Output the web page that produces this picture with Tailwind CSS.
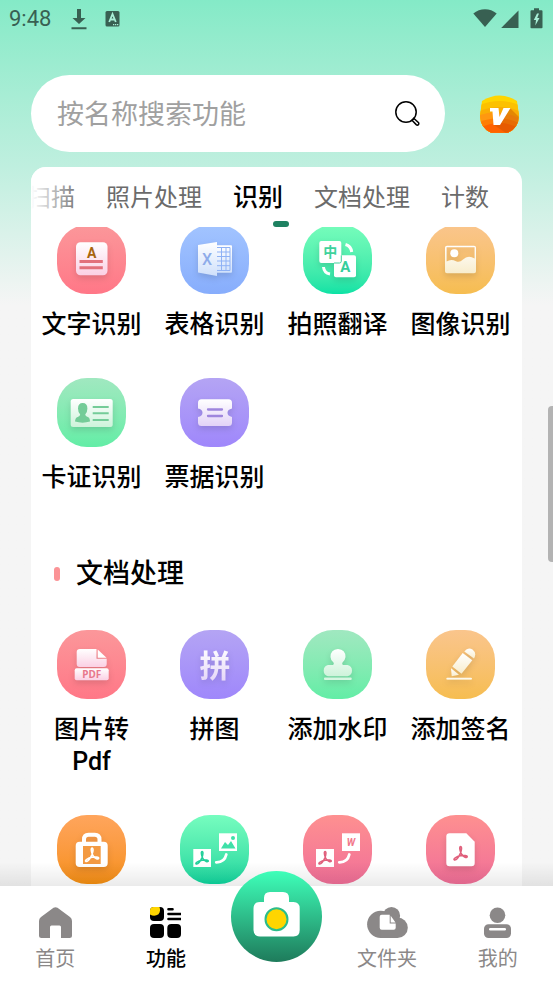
<!DOCTYPE html>
<html lang="zh-CN">
<head>
<meta charset="utf-8">
<meta name="viewport" content="width=device-width, initial-scale=1">
<title>功能</title>
<script src="https://cdn.jsdelivr.net/npm/@tailwindcss/browser@4"></script>
</head>
<body class="relative flex h-screen flex-col overflow-hidden bg-[#f5f5f5] bg-linear-to-b from-[#84eac7] via-[#bfefdf] via-[17%] to-[#f5f5f5] to-[31%] font-['Roboto','Noto_Sans_CJK_SC',sans-serif] text-black">

<svg class="absolute size-0" aria-hidden="true">
  <defs>
    <linearGradient id="pinkwhite" x1="0" y1="0" x2="0" y2="1"><stop offset="0" stop-color="#fff"/><stop offset="1" stop-color="#fbd0e4"/></linearGradient>
    <linearGradient id="bluewhite" x1="0" y1="0" x2="0" y2="1"><stop offset="0" stop-color="#fff"/><stop offset="1" stop-color="#cfe0fb"/></linearGradient>
    <linearGradient id="creamwhite" x1="0" y1="0" x2="0" y2="1"><stop offset="0" stop-color="#fff"/><stop offset="1" stop-color="#f8edcd"/></linearGradient>
    <linearGradient id="greenwhite" x1="0" y1="0" x2="0" y2="1"><stop offset="0" stop-color="#fff"/><stop offset="1" stop-color="#cdf3da"/></linearGradient>
    <linearGradient id="violetwhite" x1="0" y1="0" x2="0" y2="1"><stop offset="0" stop-color="#fff"/><stop offset="1" stop-color="#e2d2f7"/></linearGradient>
    <linearGradient id="cam" x1="0" y1="0" x2="0" y2="1"><stop offset="0" stop-color="#3effb9"/><stop offset="1" stop-color="#1e7b5b"/></linearGradient>
    <symbol id="acrobat" viewBox="0 0 16 16"><path d="M8 1.5c1.5 0 1 3.500 0 6C6.500 11 4 14.500 2.200 14 .8 13.200 4 11 8 10.200c3.500-.6 6.500-.3 6.300.9-.3 1.200-3.500.3-5-1.900C7.800 7 6.500 1.500 8 1.500z" fill="none" stroke="currentColor" stroke-width="1.500" stroke-linejoin="round"/></symbol>
  </defs>
</svg>

<header class="shrink-0">
  <div class="flex h-[37px] items-center pl-[9px] pr-[10px] text-[#386052]">
    <span class="text-[22px] leading-6">9:48</span>
    <svg class="ml-[20px] h-[22px] w-[16px]" viewBox="0 0 16 22" fill="currentColor" aria-hidden="true"><path d="M6 1h4v9h4.500L8 16 1.500 10H6zM0.500 19.300h15v1.900H.5z"/></svg>
    <svg class="ml-[18px] h-[16px] w-[15px]" viewBox="0 0 15 16" aria-hidden="true"><rect x=".5" width="14" height="15.500" rx="1.500" fill="currentColor"/><path d="M4.200 11 7.500 3l3.300 8M5.500 8.500h4" fill="none" stroke="#a8efd7" stroke-width="1.800"/><path d="M8 13h1.300v1.300H8zM10 13h1.300v1.300H10zM12 13h1.300v1.300H12z" fill="#a8efd7"/></svg>
    <svg class="ml-auto h-[20px] w-[24px]" viewBox="0 0 24 20" fill="currentColor" aria-hidden="true"><path d="M.3 4.500C7-1.200 17-1.200 23.700 4.500L12 18z"/></svg>
    <svg class="ml-[4px] h-[20px] w-[18px]" viewBox="0 0 18 20" fill="currentColor" aria-hidden="true"><path d="M17.500 1.500v17.500H.2z"/></svg>
    <svg class="ml-[11px] h-[21px] w-[13px]" viewBox="0 0 13 21" aria-hidden="true"><path d="M4 .3h5v2h2.500q1 0 1 1V19.500q0 .8-1 .8h-10q-1 0-1-.8V3.300q0-1 1-1H4z" fill="currentColor"/><path d="M7 5.500 3.800 12H6L5.300 17.500 9.500 10H7.200L9 5.500z" fill="#a8efd7"/></svg>
  </div>

  <div class="mt-[38px] flex items-center pl-[31px] pr-[34px]">
    <form class="flex h-[77px] min-w-0 flex-1 items-center rounded-full bg-white pl-[26px] pr-[24px]">
      <input type="search" aria-label="搜索功能" placeholder="按名称搜索功能" class="min-w-0 flex-1 bg-transparent pt-[2px] text-[27px] leading-10 outline-none placeholder:text-[#a0a0a0]">
      <button type="button" aria-label="搜索" class="shrink-0"><svg class="size-[28px]" viewBox="0 0 28 28" fill="none" stroke="#000" stroke-width="1.500"><circle cx="13" cy="12" r="10.200"/><path d="M19 20.200 20.700 18.200 25.600 22.600Q26.300 24 25.300 24.800 24.200 25.500 23.200 24.600Z"/></svg></button>
    </form>
    <a href="#vip" aria-label="会员" class="ml-[35px] block shrink-0">
      <svg class="h-[38px] w-[39px]" viewBox="0 0 39 38"><defs><clipPath id="vip"><path d="M2 6Q19.500-5 37 6L39 21Q38.500 33 28 37.800H11Q.5 33 0 21Z"/></clipPath></defs><g clip-path="url(#vip)"><path d="M0 0h39v38H0z" fill="#ffd500"/><path d="M0 10Q19.500 2 39 10v28H0z" fill="#fcc100"/><path d="M0 16Q19.500 8 39 16v22H0z" fill="#faae05"/><path d="M0 20Q19.500 14 39 23v15H0z" fill="#ff9810"/><path d="M0 27Q19.500 19 39 28v10H0z" fill="#ff7d05"/><path d="M0 33Q19.500 23 39 33v5H0z" fill="#ff6200"/><path d="M30 13 39 22V32L26 38 14 30Z" fill="#c24f00" opacity=".4"/></g><path d="M10 13H18.500L19.500 22 23.500 13H30.500L20 30H13.500L12.500 16.500H10Z" fill="#fff"/></svg>
    </a>
  </div>
</header>

<main class="mx-[31px] mt-[15px] flex min-h-0 flex-1 flex-col overflow-hidden rounded-t-[15px] bg-white">
  <nav class="relative flex h-[60px] shrink-0 items-center gap-[31px] overflow-hidden whitespace-nowrap pt-[2px] text-[24px] leading-8 text-[#6b6b6b]" aria-label="分类">
    <a href="#scan" class="-ml-[4px]">扫描</a>
    <a href="#photo">照片处理</a>
    <a href="#ocr" class="relative text-[25px] font-medium text-black" aria-current="true">识别<span class="absolute -bottom-[13px] left-[40px] h-[6px] w-[16px] rounded-full bg-[#1e8161]"></span></a>
    <a href="#doc">文档处理</a>
    <a href="#count">计数</a>
    <span class="absolute inset-y-0 left-0 w-[50px] bg-linear-to-r from-white to-white/0"></span>
  </nav>

  <div class="min-h-0 flex-1 overflow-hidden">
    <ul class="-ml-px -mt-[2px] grid grid-cols-4 gap-y-[37px] text-center text-[25px] font-medium leading-8">
      <li><a href="#" class="flex flex-col items-center gap-[15px]">
        <svg class="size-[69px] rounded-[30px] bg-linear-to-b from-[#fb979a] to-[#ff7787]" viewBox="0 0 69 69"><g class="drop-shadow-md"><rect x="19" y="17.300" width="31.500" height="33" rx="4.500" fill="url(#pinkwhite)"/></g><text x="34.700" y="33.300" text-anchor="middle" font-size="14" font-weight="700" fill="#a8660f">A</text><path d="M22.500 36.600h23.300M22.500 42.700h23.300" stroke="#e2707c" stroke-width="3"/></svg>
        文字识别</a></li>
      <li><a href="#" class="flex flex-col items-center gap-[15px]">
        <svg class="size-[69px] rounded-[30px] bg-linear-to-b from-[#a2c4ff] to-[#87adfc]" viewBox="0 0 69 69"><g class="drop-shadow-md"><path d="M37 20.300h14q1 0 1 1v25.400q0 1-1 1H37z" fill="url(#bluewhite)"/><path d="M18 20 37 17v34L18 47.500z" fill="url(#bluewhite)"/></g><path d="M37 22.500h13v23H37M37 27h13M37 31.500h13M37 36h13M37 40.700h13M41.500 22.500v23M46 22.500v23" fill="none" stroke="#8fb2f5"/><text x="27" y="39.700" text-anchor="middle" font-size="16" font-weight="500" fill="#8eacea">X</text></svg>
        表格识别</a></li>
      <li><a href="#" class="flex flex-col items-center gap-[15px]">
        <svg class="size-[69px] rounded-[30px] bg-linear-to-b from-[#76fdbb] to-[#09e2a5]" viewBox="0 0 69 69"><g class="drop-shadow-md"><rect x="31" y="30.300" width="22" height="22" rx="2" fill="#fff"/><rect x="16.300" y="16" width="22" height="22" rx="2" fill="#fff"/></g><path d="M31 38h5.500q1.800 0 1.800-1.800V30.300" fill="none" stroke="#3ed29c" stroke-width="1"/><path d="M42.500 19.500Q48 21 48.700 27M20.500 42Q21 48 27 49" fill="none" stroke="#fff" stroke-width="3"/><text x="27.300" y="32" text-anchor="middle" font-size="14" font-weight="700" fill="#3ed29c">中</text><text x="42.300" y="46.500" text-anchor="middle" font-size="15" font-weight="700" fill="#35cf9c">A</text></svg>
        拍照翻译</a></li>
      <li><a href="#" class="flex flex-col items-center gap-[15px]">
        <svg class="size-[69px] rounded-[30px] bg-linear-to-b from-[#fac58c] to-[#f6bd50]" viewBox="0 0 69 69"><g class="drop-shadow-md"><path fill-rule="evenodd" d="M21 20.700H48Q50 20.700 50 22.700V46.300Q50 48.300 48 48.300H21Q19 48.300 19 46.300V22.700Q19 20.700 21 20.700ZM20.600 36.500Q25 33.500 30 36.200 33.500 38 37 34.500 42 29.500 48.600 33.500V22.200H20.600Z" fill="url(#creamwhite)"/><circle cx="28.300" cy="28.300" r="4" fill="#fff"/></g></svg>
        图像识别</a></li>
      <li><a href="#" class="flex flex-col items-center gap-[15px]">
        <svg class="size-[69px] rounded-[30px] bg-linear-to-b from-[#a0e8c0] to-[#62eda6]" viewBox="0 0 69 69"><g class="drop-shadow-md"><rect x="13.700" y="21" width="42" height="28" rx="2.500" fill="url(#greenwhite)"/></g><path d="M25.700 25q4.700 0 4.700 5.500 0 4-2.200 6 .2 2 2.500 2.400Q33 39.700 33 43.500 25.700 45.800 18 43.500 18.200 39.700 20.700 38.900q2.300-.4 2.500-2.400-2.200-2-2.200-6 0-5.500 4.700-5.500z" fill="#74cc98"/><path d="M35.700 29h16M35.700 35.300h16M35.700 42h16" stroke="#74cc98" stroke-width="2"/></svg>
        卡证识别</a></li>
      <li><a href="#" class="flex flex-col items-center gap-[15px]">
        <svg class="size-[69px] rounded-[30px] bg-linear-to-b from-[#b4a4f4] to-[#9f87fb]" viewBox="0 0 69 69"><g class="drop-shadow-md"><path d="M21.500 21.300H48.500Q52 21.300 52 25V30.500Q47.500 31.500 47.500 34.700T52 39V44.500Q52 48 48.500 48H21.500Q18 48 18 44.500V39Q22.500 38 22.500 34.700T18 30.500V25Q18 21.300 21.500 21.300Z" fill="url(#violetwhite)"/></g><path d="M28 31.500h14M28 38h14" stroke="#9f86dd" stroke-width="2.300" stroke-linecap="round"/></svg>
        票据识别</a></li>
    </ul>

    <h2 class="mt-[60px] flex h-10 items-center gap-[16px] pl-[23px] text-[27px] font-medium leading-10"><span class="h-[14px] w-[6px] rounded-full bg-[#fb9396]"></span>文档处理</h2>

    <ul class="-ml-px mt-[36px] grid grid-cols-4 gap-y-[37px] text-center text-[25px] font-medium leading-8">
      <li><a href="#" class="flex flex-col items-center gap-[15px]">
        <svg class="size-[69px] rounded-[30px] bg-linear-to-b from-[#fb979a] to-[#ff7787]" viewBox="0 0 69 69"><g class="drop-shadow-md"><path d="M23 19H39.500V28.700H49.700V34Q49.700 37 46.700 37H22.700Q19.700 37 19.700 34V22Q19.700 19 23 19Z" fill="url(#pinkwhite)"/><path d="M40.700 19.500 49.500 27.700H40.700Z" fill="#fff"/><rect x="17.700" y="38.200" width="34" height="12" rx="2" fill="url(#pinkwhite)"/></g><text x="34.700" y="47.800" text-anchor="middle" font-size="10" font-weight="700" fill="#e8788c" font-family="Noto Sans">PDF</text></svg>
        <span>图片转<br>Pdf</span></a></li>
      <li><a href="#" class="flex flex-col items-center gap-[15px]">
        <svg class="size-[69px] rounded-[30px] bg-linear-to-b from-[#b4a4f4] to-[#9f87fb]" viewBox="0 0 69 69"><g class="drop-shadow-md"><text x="35" y="46.500" text-anchor="middle" font-size="31" font-weight="700" fill="url(#violetwhite)">拼</text></g></svg>
        拼图</a></li>
      <li><a href="#" class="flex flex-col items-center gap-[15px]">
        <svg class="size-[69px] rounded-[30px] bg-linear-to-b from-[#a0e8c0] to-[#62eda6]" viewBox="0 0 69 69"><g class="drop-shadow-md"><path d="M35 19Q42.500 19.500 42.500 27 42 30.500 39.500 32.500 38.500 34 40 35H44.500Q49 36 49 40.700 49 45 44.500 46.300H25Q20.700 45 20.700 40.700 20.700 36 25 35H30Q31.500 34 30.500 32.500 27.500 30 27.500 27 27.500 19.500 35 19Z" fill="url(#greenwhite)"/><rect x="21" y="47.600" width="27.700" height="2.400" rx="1" fill="#d6f6e1"/></g></svg>
        添加水印</a></li>
      <li><a href="#" class="flex flex-col items-center gap-[15px]">
        <svg class="size-[69px] rounded-[30px] bg-linear-to-b from-[#fac58c] to-[#f6bd50]" viewBox="0 0 69 69"><g class="drop-shadow-md" fill="url(#creamwhite)"><path d="M38.300 21.500Q42 16.500 46.500 19.500 51 23 48 28.500Z"/><path d="M36.700 23 46.300 30.300 35.500 43.800 26.300 36.500Z"/><path d="M25 38.300 33 44.700 25.700 46.300Z"/><rect x="20.300" y="47.800" width="25.700" height="2" rx="1"/></g></svg>
        添加签名</a></li>
      <li><a href="#" aria-label="PDF加密" class="flex flex-col items-center">
        <svg class="size-[69px] rounded-[30px] bg-linear-to-b from-[#ffa55c] to-[#f6900f]" viewBox="0 0 69 69"><g class="drop-shadow-md"><rect x="18.700" y="26.700" width="32" height="25.300" rx="4" fill="#fff"/><path d="M27 27V24.500Q27 19.700 31.500 19.700H37.800Q42.500 19.700 42.500 24.500V27" fill="none" stroke="#fff" stroke-width="4"/></g><rect x="26" y="31" width="17.700" height="18" fill="#f39a42"/><use href="#acrobat" x="26.500" y="31.500" width="17" height="17" color="#fff"/></svg></a></li>
      <li><a href="#" aria-label="PDF转图片" class="flex flex-col items-center">
        <svg class="size-[69px] rounded-[30px] bg-linear-to-b from-[#76fdbf] to-[#09d79f]" viewBox="0 0 69 69"><rect x="13.300" y="34" width="17.700" height="18" fill="#fff"/><use href="#acrobat" x="14" y="35" width="16" height="16" color="#22cf9a"/><rect x="39" y="18.300" width="18" height="17.700" fill="#fff"/><path d="M41 33.500 45 27 48 30 51 26 55.500 33.500Z" fill="#3fe0a8"/><circle cx="53" cy="23" r="2" fill="#3fe0a8"/><path d="M36.300 47.300Q44.500 47.500 46.300 39.500" fill="none" stroke="#fff" stroke-width="2.800" stroke-linecap="round"/></svg></a></li>
      <li><a href="#" aria-label="PDF转Word" class="flex flex-col items-center">
        <svg class="size-[69px] rounded-[30px] bg-linear-to-b from-[#fe9090] to-[#f16f98]" viewBox="0 0 69 69"><rect x="13" y="34" width="18" height="18" fill="#fff"/><use href="#acrobat" x="14" y="35" width="16" height="16" color="#e0607c"/><rect x="39" y="18.300" width="18" height="17.700" fill="#fff"/><text x="48" y="30.800" text-anchor="middle" font-size="10" font-weight="700" font-style="italic" fill="#f2788c">W</text><path d="M36.300 47.300Q44.500 47.500 46.300 39.500" fill="none" stroke="#fff" stroke-width="2.800" stroke-linecap="round"/></svg></a></li>
      <li><a href="#" aria-label="PDF提取" class="flex flex-col items-center">
        <svg class="size-[69px] rounded-[30px] bg-linear-to-b from-[#fe9090] to-[#f16f98]" viewBox="0 0 69 69"><g class="drop-shadow-md"><path d="M23.500 18.300H40.300L48.700 26.700V48Q48.700 51.300 45.500 51.300H23.500Q20.300 51.300 20.300 48V21.500Q20.300 18.300 23.500 18.300Z" fill="#fff"/></g><use href="#acrobat" x="26" y="30" width="17" height="17" color="#e0607c"/></svg></a></li>
    </ul>
  </div>
</main>

<footer class="relative shrink-0">
  <div class="pointer-events-none absolute inset-x-0 bottom-full h-[24px] bg-linear-to-b from-black/0 to-black/8"></div>
  <nav class="grid h-[98px] grid-cols-5 bg-white text-center text-[20px] leading-6 text-[#8b8888]" aria-label="主导航">
    <a href="#home" class="flex flex-col items-center gap-[9px] pt-[21px]">
      <svg class="h-[31px] w-[33px]" viewBox="0 0 33 31" fill="#8b8888"><path d="M14.500.8Q16.500-.5 18.500.8L31 10Q33 11.500 33 14V28.500Q33 31 30.500 31H22V20Q22 18.500 20.500 18.500H12.500Q11 18.500 11 20V31H2.500Q0 31 0 28.500V14Q0 11.500 2 10Z"/></svg>
      首页</a>
    <a href="#func" class="flex flex-col items-center gap-[9px] pt-[21px] font-medium text-black" aria-current="page">
      <svg class="h-[31px] w-[31px]" viewBox="0 0 31 31"><rect width="14" height="14" rx="4"/><rect y="17" width="14" height="14" rx="4"/><rect x="17.300" y="17" width="13.700" height="14" rx="4"/><path d="M0 3.500Q0 0 3.500 0H9.500Q11 4 8.500 7.300 4.500 10 0 7.500Z" fill="#ffd500"/><path d="M18.500 2.300h4M18.500 7h12M18.500 12h12" stroke="#000" stroke-width="2.600" stroke-linecap="round"/></svg>
      功能</a>
    <div class="flex justify-center">
      <button type="button" aria-label="拍照" class="relative -top-[15px] size-[91px] rounded-full">
        <svg class="size-[91px]" viewBox="0 0 91 91"><circle cx="45.500" cy="45.500" r="45.500" fill="url(#cam)"/><path d="M39 21H52Q58 21 58 27V31H62.500Q68.700 31 68.700 37.500V59Q68.700 65.500 62.500 65.500H29Q22.500 65.500 22.500 59V37.500Q22.500 31 29 31H33V27Q33 21 39 21Z" fill="#fff"/><circle cx="45.500" cy="48.300" r="11" fill="#ffd500" stroke="#2bbd8b" stroke-width="2"/></svg>
      </button>
    </div>
    <a href="#files" class="flex flex-col items-center gap-[9px] pt-[21px]">
      <svg class="h-[31px] w-[41px]" viewBox="0 0 41 31"><g fill="#8b8888"><circle cx="13.700" cy="17.300" r="13.600"/><circle cx="24.500" cy="8.700" r="8.600"/><circle cx="30.500" cy="20.700" r="10.300"/><path d="M13.700 10H30.500V31H13.700z"/></g><path d="M14.700 7.700H22.700V16.500H28.700V20.700Q28.700 22.700 26.700 22.700H14.700Q12.700 22.700 12.700 20.700V9.700Q12.700 7.700 14.700 7.700ZM23.700 8.700 28.500 15.500H23.700Z" fill="#fff"/></svg>
      文件夹</a>
    <a href="#me" class="flex flex-col items-center gap-[9px] pt-[21px]">
      <svg class="h-[31px] w-[27px]" viewBox="0 0 27 31" fill="#8b8888"><circle cx="13.500" cy="8.300" r="7.800"/><rect y="17.300" width="27" height="13.700" rx="4.500"/><rect x="5" y="21" width="17" height="2.500" rx="1.200" fill="#fff"/></svg>
      我的</a>
  </nav>
</footer>

<div class="absolute right-0 top-[406px] h-[156px] w-[5px] rounded-l-sm bg-[#b3b3b3]" aria-hidden="true"></div>
</body>
</html>
